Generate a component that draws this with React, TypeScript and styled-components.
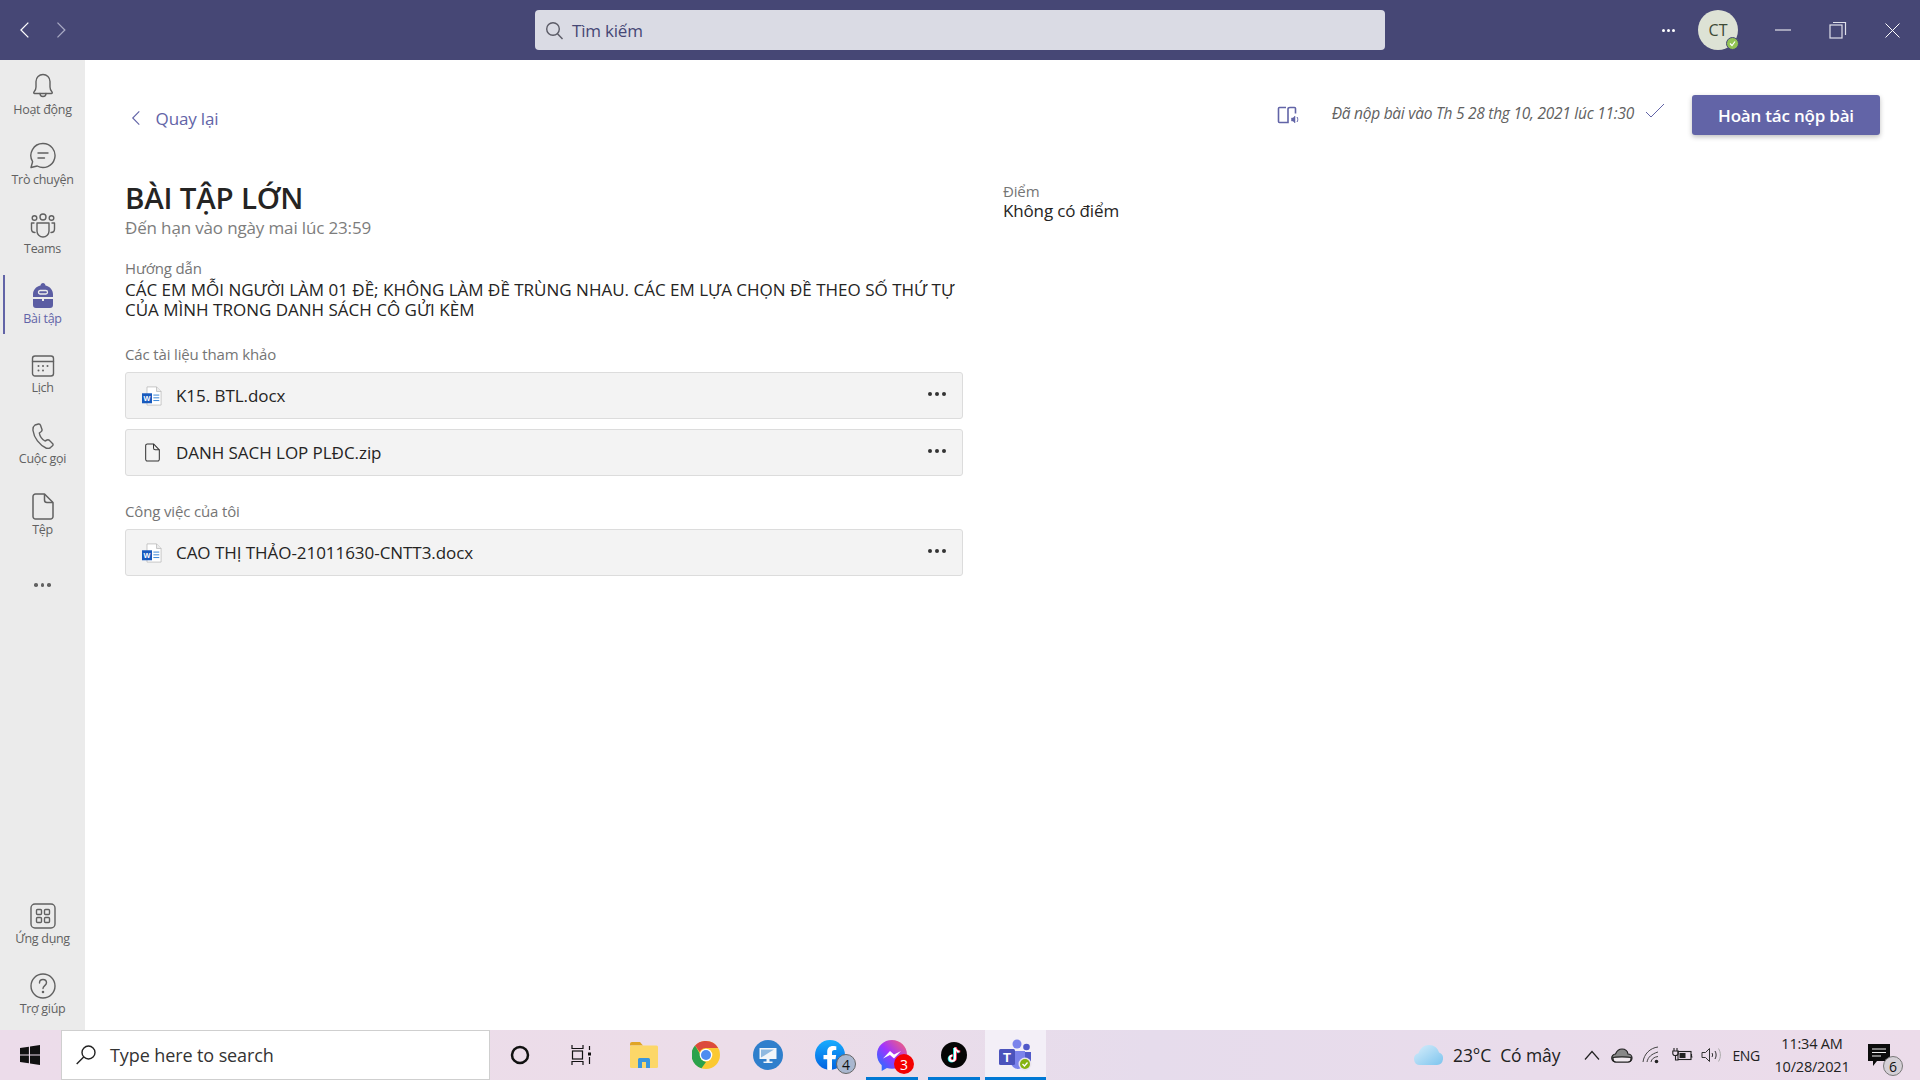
import React from "react";
import styled, { createGlobalStyle } from "styled-components";

const Global = createGlobalStyle`
  html, body { margin: 0; padding: 0; height: 100%; overflow: hidden; }
  body { font-family: "Open Sans", "Noto Sans", "Liberation Sans", sans-serif; background: #fff; color: #252423; }
  #root { height: 100%; }
  * { box-sizing: border-box; }
`;

const Page = styled.div`
  width: 1920px; height: 1080px; display: flex; flex-direction: column;
`;
const TitleBar = styled.header`
  height: 60px; flex: none; background: #464775; display: flex; align-items: center; position: relative; z-index: 2;
`;
const NavArrows = styled.div`
  width: 535px; flex: none; display: flex; gap: 26px; padding: 0 0 0 19px; align-items: center;
`;
const SearchBox = styled.div`
  width: 850px; height: 40px; flex: none; background: #dadbe4; border-radius: 4px; display: flex; align-items: center;
  padding-left: 10px; gap: 8px; font-size: 17px; color: #464775; letter-spacing: -0.2px;
`;
const TitleRight = styled.div`
  flex: 1; display: flex; align-items: center; position: relative;
`;
const Dots = styled.div`
  display: flex; gap: ${p => p.$gap ?? 3}px;
  i { display: block; width: ${p => p.$size ?? 3}px; height: ${p => p.$size ?? 3}px; border-radius: 50%; background: ${p => p.$color ?? "#fff"}; }
`;
const MoreHolder = styled.div`
  margin-left: 275px; width: 16px; display: flex; justify-content: center;
`;
const Avatar = styled.div`
  margin-left: 22px; width: 40px; height: 40px; border-radius: 50%; background: #dde2d5; color: #3d4a35;
  display: flex; align-items: center; justify-content: center; font-size: 16px; position: relative; flex: none;
`;
const Presence = styled.span`
  position: absolute; right: -1px; bottom: 0; width: 13px; height: 13px; border-radius: 50%; background: #92c353;
  border: 1px solid #464775; display: flex; align-items: center; justify-content: center;
`;
const WinButtons = styled.div`
  margin-left: 37px; display: flex; gap: 38px; align-items: center;
`;

const Middle = styled.div`
  flex: 1; min-height: 0; display: flex;
`;
const Rail = styled.nav`
  width: 85px; flex: none; background: #ebebeb; box-shadow: 1px 0 3px rgba(0,0,0,.06); display: flex; flex-direction: column;
  justify-content: space-between;
`;
const RailGroup = styled.div`
  display: flex; flex-direction: column;
`;
const RailItem = styled.div`
  height: 70px; display: flex; flex-direction: column; align-items: center; justify-content: center; gap: 2px;
  font-size: 12.5px; letter-spacing: -0.3px; color: ${p => (p.$active ? "#6264a7" : "#616161")}; position: relative; line-height: 16px;
  svg { display: block; }
`;
const ActiveBar = styled.span`
  position: absolute; left: 3px; top: 5px; bottom: 6px; width: 2px; background: #6264a7;
`;
const MoreItem = styled.div`
  height: 40px; margin-top: 15px; display: flex; align-items: center; justify-content: center;
`;

const Main = styled.main`
  flex: 1; min-width: 0; padding: 35px 40px 0 40px; background: #fff;
`;
const HeaderRow = styled.div`
  height: 40px; display: flex; align-items: center; justify-content: space-between;
`;
const BackLink = styled.div`
  display: flex; align-items: center; gap: 15px; color: #6264a7; font-size: 17px; padding: 6px 0 0 6px; letter-spacing: -0.15px;
`;
const Submit = styled.div`
  display: flex; align-items: center;
`;
const SubmittedText = styled.span`
  font-style: italic; font-size: 15.5px; color: #616161; margin: -5px 11px 0 33px; letter-spacing: -0.25px;
`;
const PrimaryButton = styled.button`
  width: 188px; height: 40px; margin-left: 27px; border: 0; border-radius: 3px; background: #6264a7; color: #fff;
  font: 600 17px "Open Sans", sans-serif; letter-spacing: -0.2px; box-shadow: 0 2px 5px rgba(0,0,0,.25);
`;
const Body = styled.div`
  display: grid; grid-template-columns: 838px 1fr; column-gap: 40px; margin-top: 44px;
`;
const Title = styled.h1`
  margin: 0; font-size: 29.5px; font-weight: 600; line-height: 38px; color: #252423; letter-spacing: -0.2px;
`;
const Due = styled.div`
  font-size: 17px; line-height: 20px; color: #7d7d7d; letter-spacing: -0.15px; margin-top: 1px;
`;
const SmallLabel = styled.div`
  font-size: 15px; line-height: 20px; color: #757575; letter-spacing: -0.15px; margin-top: ${p => p.$top ?? 0}px;
`;
const Instructions = styled.div`
  font-size: 17px; line-height: 20px; color: #252423; letter-spacing: 0; margin-top: 2px;
`;
const FileList = styled.div`
  display: flex; flex-direction: column; gap: 10px; margin-top: 8px;
`;
const FileRow = styled.div`
  height: 47px; background: #f3f3f3; border: 1px solid #dcdcdc; border-radius: 3px; display: flex; align-items: center;
  padding: 0 16px 0 16px;
`;
const FileIcon = styled.div`
  width: 20px; display: flex; justify-content: center; flex: none; margin-right: 14px;
`;
const FileName = styled.span`
  flex: 1; font-size: 17px; color: #252423; letter-spacing: -0.05px;
`;
const RowMenu = styled.div`
  margin-top: -3px;
`;
const RightCol = styled.aside`
  padding-top: 2px;
`;
const ScoreValue = styled.div`
  font-size: 17px; line-height: 19px; color: #252423; letter-spacing: -0.15px;
`;

const Taskbar = styled.footer`
  height: 50px; flex: none; display: flex; align-items: stretch; background: linear-gradient(90deg, #ecdcea 0%, #ecdde9 40%, #e6dcec 60%, #ecdcea 100%);
  position: relative; z-index: 2;
`;
const StartButton = styled.div`
  width: 61px; flex: none; display: flex; align-items: center; justify-content: center; padding-right: 2px;
`;
const TaskSearch = styled.div`
  width: 429px; flex: none; background: #fff; border: 1px solid #cfcfcf; display: flex; align-items: center; padding-left: 13px; gap: 13px;
  font: 18px "Open Sans", sans-serif; color: #333; letter-spacing: -0.1px;
`;
const TaskIcons = styled.div`
  display: flex; flex: none; padding-left: 0;
`;
const TaskCell = styled.div`
  width: ${p => p.$w ?? 62}px; display: flex; align-items: center; justify-content: center; position: relative;
  background: ${p => (p.$focused ? "#f3eff7" : "transparent")};
`;
const RunningLine = styled.span`
  position: absolute; left: ${p => p.$inset ?? 5}px; right: ${p => p.$inset ?? 5}px; bottom: 0; height: 3px; background: #0078d4;
`;
const Badge = styled.span`
  position: absolute; width: 20px; height: 20px; border-radius: 50%; font: 14px "Open Sans", sans-serif;
  display: flex; align-items: center; justify-content: center;
  left: ${p => p.$left}px; top: ${p => p.$top}px;
  background: ${p => p.$bg}; color: ${p => p.$fg}; border: ${p => p.$border ?? "none"};
`;
const Tray = styled.div`
  margin-left: auto; display: flex; align-items: center; color: #222; position: relative; height: 100%;
`;
const WeatherText = styled.span`
  font: 17.5px "Open Sans", sans-serif; letter-spacing: -0.1px; margin-left: ${p => p.$gap ?? 9}px;
`;
const TrayIcon = styled.div`
  width: 30px; display: flex; justify-content: center; align-items: center;
`;
const TrayChevron = styled(TrayIcon)`
  margin-left: 17px;
`;
const Eng = styled.span`
  font: 14px "Open Sans", sans-serif; margin-left: 5px; letter-spacing: -0.3px;
`;
const Clock = styled.div`
  margin-left: 12px; width: 80px; text-align: center; font: 14.5px/23px "Open Sans", sans-serif; letter-spacing: -0.2px;
`;
const Notify = styled.div`
  width: 68px; padding-left: 16px; position: relative; display: flex; align-items: center; height: 100%;
`;

const Chevron = ({ dir, color, size = 18 }: { dir: "l" | "r"; color: string; size?: number }) => (
  <svg width={size * 0.6} height={size} viewBox="0 0 11 18" fill="none" stroke={color} strokeWidth="1.3">
    <path d={dir === "l" ? "M9.5 1.5 2 9l7.5 7.5" : "M1.5 1.5 9 9l-7.5 7.5"} />
  </svg>
);

const stroke = { fill: "none", stroke: "#616161", strokeWidth: 1.4, strokeLinecap: "round" as const, strokeLinejoin: "round" as const };

const Bell = () => (
  <svg width="24" height="28" viewBox="0 0 24 28" {...stroke}>
    <path d="M3 20c1.500-1.500 2-3 2-5V9.500a7 7 0 0 1 14 0V15c0 2 .5 3.500 2 5 .6.7.2 1.500-.6 1.500H3.600C2.800 21.500 2.400 20.700 3 20z" />
    <path d="M9 21.500a3 3 0 0 0 6 0" />
  </svg>
);
const Chat = () => (
  <svg width="28" height="28" viewBox="0 0 28 28" {...stroke}>
    <path d="M14 1.500a12 12 0 1 1-5.800 22.500L2 25.500l1.600-5.800A12 12 0 0 1 14 1.500z" />
    <path d="M9 11h10M9 16h6.500" />
  </svg>
);
const TeamsIcon = () => (
  <svg width="28" height="26" viewBox="0 0 28 26" {...stroke}>
    <circle cx="14" cy="4" r="3" /><circle cx="5.500" cy="5" r="2.300" /><circle cx="22.500" cy="5" r="2.300" />
    <path d="M8 10h12v8a6 6 0 0 1-12 0z" />
    <path d="M5 10H2.500v6c0 2 1.500 3.500 3.500 3.500M23 10h2.500v6c0 2-1.500 3.500-3.500 3.500" />
  </svg>
);
const Backpack = () => (
  <svg width="22" height="26" viewBox="0 0 22 26">
    <path d="M11 0c1.500 0 2.200 1.200 2.500 2.500C18 3.500 21 7 21 11.500V14H1v-2.500C1 7 4 3.500 8.500 2.500 8.800 1.200 9.500 0 11 0z" fill="#5b5da3" />
    <path d="M1 16h9v2h2v-2h9v6a3 3 0 0 1-3 3H4a3 3 0 0 1-3-3z" fill="#5b5da3" />
    <rect x="6.500" y="7.500" width="9" height="3.500" rx="1.700" fill="none" stroke="#ebebeb" strokeWidth="1.300" />
  </svg>
);
const Calendar = () => (
  <svg width="24" height="24" viewBox="0 0 24 24" {...stroke}>
    <rect x="1.500" y="2" width="21" height="20" rx="2.500" /><path d="M1.500 7.500h21" />
    <g fill="#616161" stroke="none">
      <circle cx="7.500" cy="12" r="1" /><circle cx="12" cy="12" r="1" /><circle cx="16.500" cy="12" r="1" />
      <circle cx="7.500" cy="16.500" r="1" /><circle cx="12" cy="16.500" r="1" />
    </g>
  </svg>
);
const Phone = () => (
  <svg width="24" height="26" viewBox="0 0 24 26" {...stroke}>
    <path d="M4 2 7.500 1c1-.2 1.700.3 2 1.200L11 6.500c.3 1-.2 1.700-1 2.300L8.300 10c.5 3 2.700 6.300 5.700 8l2-1c1-.5 1.700-.3 2.500.4l3 3c.7.8.7 1.700 0 2.400l-2 1.800c-1.300 1-3 1-4.500.4C8.500 22 3 15 2 7.500 1.800 5 2.500 3 4 2z" />
  </svg>
);
const DocOutline = ({ w = 22, h = 27, color = "#616161" }: { w?: number; h?: number; color?: string }) => (
  <svg width={w} height={h} viewBox="0 0 22 27" fill="none" stroke={color} strokeWidth="1.500" strokeLinejoin="round">
    <path d="M3.500 1h9L21 9.500V23.500a2.500 2.500 0 0 1-2.500 2.500h-15A2.500 2.500 0 0 1 1 23.500v-20A2.500 2.500 0 0 1 3.500 1z" />
    <path d="M12.500 1v6a2.500 2.500 0 0 0 2.500 2.500h6" />
  </svg>
);
const Apps = () => (
  <svg width="26" height="26" viewBox="0 0 26 26" {...stroke}>
    <rect x="1" y="1" width="24" height="24" rx="4" />
    <rect x="6.500" y="6.500" width="5" height="5" rx="1" /><rect x="14.500" y="6.500" width="5" height="5" rx="1" />
    <rect x="6.500" y="14.500" width="5" height="5" rx="1" /><rect x="14.500" y="14.500" width="5" height="5" rx="1" />
  </svg>
);
const Help = () => (
  <svg width="26" height="26" viewBox="0 0 26 26" {...stroke}>
    <circle cx="13" cy="13" r="12" />
    <path d="M9.500 10c0-2 1.500-3.500 3.500-3.500s3.500 1.500 3.500 3.300c0 2.700-3.500 3-3.500 5.700" />
    <circle cx="13" cy="19" r=".6" />
  </svg>
);
const SearchGlass = ({ color = "#5b5b66", size = 19 }: { color?: string; size?: number }) => (
  <svg width={size} height={size} viewBox="0 0 19 19" fill="none" stroke={color} strokeWidth="1.400">
    <circle cx="8" cy="8" r="6.300" /><path d="m12.500 12.700 5 5.300" />
  </svg>
);
const TaskSearchGlass = () => (
  <svg width="22" height="22" viewBox="0 0 22 22" fill="none" stroke="#222" strokeWidth="1.400">
    <circle cx="13.500" cy="8.500" r="6.500" /><path d="m8.700 13-7 7" />
  </svg>
);
const WordIcon = () => (
  <svg width="22" height="22" viewBox="0 0 22 22">
    <path d="M5.500 1h10.500l5 5v15H5.500z" fill="#fff" stroke="#b5b5b5" strokeWidth=".8" />
    <path d="M16 1v5h5" fill="#ececec" stroke="#b5b5b5" strokeWidth=".8" />
    <path d="M12.500 10H19M12.500 13H19M12.500 16H19" stroke="#2b7cd3" strokeWidth="1" />
    <rect x="0" y="8" width="11" height="11" fill="#185abd" />
    <text x="5.500" y="16.500" textAnchor="middle" fontSize="8" fontWeight="700" fill="#fff" fontFamily="Liberation Sans">W</text>
  </svg>
);
const ImmersiveReader = () => (
  <svg width="22" height="20" viewBox="0 0 22 20" fill="none" stroke="#6264a7" strokeWidth="1.600">
    <path d="M9 2.500H2.500a1 1 0 0 0-1 1V16.500a1 1 0 0 0 1 1H11V4c0-1 1-1.500 2-1.500h4.500a1 1 0 0 1 1 1v5" />
    <path d="M14.500 13h1.500l2-2v7l-2-2h-1.500z" fill="#6264a7" strokeWidth=".5" />
    <path d="M20 12c1 1.300 1 3.700 0 5" strokeWidth="1" />
  </svg>
);
const WinLogo = () => (
  <svg width="20" height="20" viewBox="0 0 20 20" fill="#111">
    <path d="M0 3 8.900 1.700v7.800H0zM10 1.500 20 0v9.500H10zM0 10.500h8.900v7.800L0 17zM10 10.500h10V20l-10-1.500z" />
  </svg>
);
const TaskView = () => (
  <svg width="20" height="20" viewBox="0 0 20 20" fill="none" stroke="#111" strokeWidth="1.200">
    <path d="M1 0v3.500h11V0M1 20v-3.500h11V20" />
    <rect x="1.500" y="6" width="10" height="8" />
    <path d="M18.500 1v4M18.500 12v7" />
    <rect x="17" y="7.500" width="3" height="3" fill="#111" stroke="none" />
  </svg>
);
const Folder = () => (
  <svg width="28" height="26" viewBox="0 0 28 26">
    <path d="M0 2a2 2 0 0 1 2-2h8l3 3.500H0z" fill="#e0a526" />
    <rect x="0" y="3.500" width="28" height="22.500" rx="1.500" fill="#fcd768" />
    <path d="M8 26v-8.500a1.500 1.500 0 0 1 1.500-1.500h9a1.500 1.500 0 0 1 1.500 1.500V26h-4v-6h-4v6z" fill="#3a96dd" />
  </svg>
);
const Chrome = () => (
  <svg width="28" height="28" viewBox="0 0 28 28">
    <circle cx="14" cy="14" r="14" fill="#fbc932" />
    <path d="M14 0a14 14 0 0 1 12.100 7H14a7 7 0 0 0-6.300 4L3 4.500A14 14 0 0 1 14 0z" fill="#dc4a3d" />
    <path d="M3 4.500 8 13a7 7 0 0 0 6 8l-4.500 6.300A14 14 0 0 1 3 4.500z" fill="#2ba24c" />
    <circle cx="14" cy="14" r="6.300" fill="#fff" /><circle cx="14" cy="14" r="5" fill="#4f8df0" />
  </svg>
);
const MonitorApp = () => (
  <svg width="30" height="30" viewBox="0 0 30 30">
    <circle cx="15" cy="15" r="15" fill="#2f7fcc" />
    <rect x="6.500" y="8" width="17" height="11" fill="#f2f6fa" />
    <path d="M8 17.500 21 9.500H8z" fill="#8fb9e0" />
    <path d="M13.500 19h3v2.500h3V23h-9v-1.500h3z" fill="#f2f6fa" />
  </svg>
);
const Facebook = () => (
  <svg width="30" height="30" viewBox="0 0 30 30">
    <defs><linearGradient id="fbg" x1="0" y1="0" x2="0" y2="1"><stop offset="0" stopColor="#18acfe" /><stop offset="1" stopColor="#0163e0" /></linearGradient></defs>
    <circle cx="15" cy="15" r="15" fill="url(#fbg)" />
    <path d="M20.500 19.300 21.200 15H17v-2.800c0-1.200.6-2.300 2.400-2.300h1.900V6.200s-1.700-.3-3.400-.3c-3.400 0-5.700 2.100-5.700 5.800V15H8.500v4.300h3.700v10.500a15 15 0 0 0 4.800 0V19.300z" fill="#fff" />
  </svg>
);
const Messenger = () => (
  <svg width="30" height="31" viewBox="0 0 30 31">
    <defs><linearGradient id="msg" x1="0" y1="1" x2="1" y2="0"><stop offset="0" stopColor="#0a7cff" /><stop offset=".5" stopColor="#a033ff" /><stop offset="1" stopColor="#ff6968" /></linearGradient></defs>
    <path d="M15 0C6.600 0 0 6.200 0 14.500c0 4.300 1.800 8.100 4.700 10.700V31l5.200-3c1.600.4 3.300.7 5.100.7 8.400 0 15-6.200 15-14.200S23.400 0 15 0z" fill="url(#msg)" />
    <path d="m6 18.500 7-7.500 4 3.500 7-3.500-7 7.500-4-3.500z" fill="#fff" />
  </svg>
);
const TikTok = () => (
  <svg width="26" height="26" viewBox="0 0 26 26">
    <circle cx="13" cy="13" r="13" fill="#050505" />
    <path d="M14 5.500v10.700a2.700 2.700 0 1 1-2.700-2.700" fill="none" stroke="#25f4ee" strokeWidth="2.200" transform="translate(-.8 .5)" />
    <path d="M14 5.500c.3 2.500 2 4 4.500 4.200" fill="none" stroke="#25f4ee" strokeWidth="2.200" transform="translate(-.8 .5)" />
    <path d="M14 5.500v10.700a2.700 2.700 0 1 1-2.700-2.700" fill="none" stroke="#fe2c55" strokeWidth="2.200" transform="translate(.8 -.2)" />
    <path d="M14 5.500c.3 2.500 2 4 4.500 4.200" fill="none" stroke="#fe2c55" strokeWidth="2.200" transform="translate(.8 -.2)" />
    <path d="M14 5.500v10.700a2.700 2.700 0 1 1-2.700-2.700M14 5.500c.3 2.500 2 4 4.500 4.200" fill="none" stroke="#fff" strokeWidth="2" />
  </svg>
);
const TeamsLogo = () => (
  <svg width="34" height="32" viewBox="0 0 34 32">
    <circle cx="18" cy="5" r="4.500" fill="#7b83eb" />
    <circle cx="27.500" cy="8" r="3.300" fill="#5059c9" />
    <path d="M21 13h11v8.500a5 5 0 0 1-5 5h-1z" fill="#5059c9" />
    <path d="M11 12h15v11a7 7 0 0 1-14 0z" fill="#7b83eb" />
    <rect x="0" y="10" width="16" height="16" rx="1.500" fill="#4b53bc" />
    <text x="8" y="22.500" textAnchor="middle" fontSize="13" fontWeight="700" fill="#fff" fontFamily="Liberation Sans">T</text>
    <circle cx="26" cy="25" r="6.500" fill="#e9e4ee" />
    <circle cx="26" cy="25" r="5" fill="#85b30f" />
    <path d="m23.500 25 2 2 3-3.500" fill="none" stroke="#fff" strokeWidth="1.300" />
  </svg>
);
const Cloud = () => (
  <svg width="30" height="22" viewBox="0 0 30 22">
    <defs><linearGradient id="clo" x1="0" y1="0" x2="1" y2="1"><stop offset="0" stopColor="#d8eefb" /><stop offset="1" stopColor="#7cc4ee" /></linearGradient></defs>
    <path d="M7 21a6 6 0 0 1-1.500-11.800C7 4.500 11 1 16 1c5 0 9 3 10 7.500A6.500 6.500 0 0 1 24 21z" fill="url(#clo)" />
  </svg>
);
const Onedrive = () => (
  <svg width="22" height="15" viewBox="0 0 22 15" fill="none" stroke="#222" strokeWidth="1.200">
    <path d="M5 14a4 4 0 0 1-.5-8C6 2.500 8.500 1 11 1c3 0 5.500 2 6 5a4 4 0 0 1 0 8z" fill="#888" />
    <path d="M2 9.500c2-.8 16-.8 18 0V11c0 2-1.500 3-3 3H5c-1.500 0-3-1-3-3z" fill="#f1eaf0" />
  </svg>
);
const Wifi = () => (
  <svg width="20" height="18" viewBox="0 0 20 18" fill="none" stroke="#444" strokeWidth="1">
    <path d="M1 16C2 8 8 2 16 1M5 16c1-5 4.500-8 11-10M9 16c.5-3 3-5 7-5.500" />
    <circle cx="14.500" cy="15.500" r="1.800" fill="#222" stroke="none" />
  </svg>
);
const Battery = () => (
  <svg width="22" height="16" viewBox="0 0 22 16" fill="none" stroke="#222" strokeWidth="1.100">
    <rect x="7" y="4.500" width="13" height="8" /><rect x="8.500" y="6" width="6" height="5" fill="#222" stroke="none" />
    <path d="M20.500 7v3h1" />
    <path d="M3 1v3M6 1v3M1.800 4h5.400v2.500c0 1-1 2-2.700 2s-2.700-1-2.700-2zM4.500 8.500V13h3" />
  </svg>
);
const Speaker = () => (
  <svg width="22" height="16" viewBox="0 0 22 16" fill="none" stroke="#333" strokeWidth="1">
    <path d="M1 5.500h3.500L8.500 1.500v13l-4-4H1z" />
    <path d="M11 6c.8 1.200.8 2.800 0 4M14 4c1.500 2.300 1.500 5.700 0 8" />
    <path d="M17.500 1.500c2.500 4 2.500 9 0 13" stroke="#aaa" />
  </svg>
);
const NotifIcon = () => (
  <svg width="22" height="22" viewBox="0 0 22 22">
    <path d="M0 0h22v17H9l-4 5v-5H0z" fill="#0c0c0c" />
    <path d="M4 5h14M4 8.500h14M4 12h9" stroke="#eee" strokeWidth="1.100" />
  </svg>
);
const SubmittedCheck = styled.svg`
  margin-top: -8px;
`;

const DotsGroup = ({ gap, size, color }: { gap?: number; size?: number; color?: string }) => (
  <Dots $gap={gap} $size={size} $color={color}><i /><i /><i /></Dots>
);

const railTop = [
  { label: "Hoạt động", icon: <Bell /> },
  { label: "Trò chuyện", icon: <Chat /> },
  { label: "Teams", icon: <TeamsIcon /> },
  { label: "Bài tập", icon: <Backpack />, active: true },
  { label: "Lịch", icon: <Calendar /> },
  { label: "Cuộc gọi", icon: <Phone /> },
  { label: "Tệp", icon: <DocOutline /> },
];

const FileItem = ({ icon, name }: { icon: React.ReactNode; name: string }) => (
  <FileRow>
    <FileIcon>{icon}</FileIcon>
    <FileName>{name}</FileName>
    <RowMenu><DotsGroup gap={3} size={4} color="#333" /></RowMenu>
  </FileRow>
);

export default function App() {
  return (
    <Page>
      <Global />
      <TitleBar>
        <NavArrows>
          <Chevron dir="l" color="#fff" />
          <Chevron dir="r" color="#a9aac4" />
        </NavArrows>
        <SearchBox><SearchGlass />Tìm kiếm</SearchBox>
        <TitleRight>
          <MoreHolder><DotsGroup gap={2} size={3} /></MoreHolder>
          <Avatar>CT<Presence><svg width="7" height="7" viewBox="0 0 7 7" fill="none" stroke="#fff" strokeWidth="1.200"><path d="m1 3.500 2 2 3-4" /></svg></Presence></Avatar>
          <WinButtons>
            <svg width="16" height="16" viewBox="0 0 16 16" stroke="#fff" strokeWidth="1"><path d="M0 8h16" /></svg>
            <svg width="18" height="18" viewBox="0 0 18 18" fill="none" stroke="#dfe0ea" strokeWidth="1.200"><rect x="1" y="4" width="12" height="13" /><path d="M4 1.500h12.500V14" /></svg>
            <svg width="15" height="15" viewBox="0 0 15 15" stroke="#fff" strokeWidth="1"><path d="m.5.500 14 14M14.500.500l-14 14" /></svg>
          </WinButtons>
        </TitleRight>
      </TitleBar>
      <Middle>
        <Rail>
          <RailGroup>
            {railTop.map(it => (
              <RailItem key={it.label} $active={it.active}>
                {it.active && <ActiveBar />}
                {it.icon}
                <span>{it.label}</span>
              </RailItem>
            ))}
            <MoreItem><DotsGroup gap={3} size={3.5} color="#616161" /></MoreItem>
          </RailGroup>
          <RailGroup>
            <RailItem><Apps /><span>Ứng dụng</span></RailItem>
            <RailItem><Help /><span>Trợ giúp</span></RailItem>
          </RailGroup>
        </Rail>
        <Main>
          <HeaderRow>
            <BackLink><Chevron dir="l" color="#6264a7" size={16} />Quay lại</BackLink>
            <Submit>
              <ImmersiveReader />
              <SubmittedText>Đã nộp bài vào Th 5 28 thg 10, 2021 lúc 11:30</SubmittedText>
              <SubmittedCheck width="20" height="16" viewBox="0 0 20 16" fill="none" stroke="#6264a7" strokeWidth="1"><path d="m1 9 5 5L19 1" /></SubmittedCheck>
              <PrimaryButton>Hoàn tác nộp bài</PrimaryButton>
            </Submit>
          </HeaderRow>
          <Body>
            <section>
              <Title>BÀI TẬP LỚN</Title>
              <Due>Đến hạn vào ngày mai lúc 23:59</Due>
              <SmallLabel $top={20}>Hướng dẫn</SmallLabel>
              <Instructions>CÁC EM MỖI NGƯỜI LÀM 01 ĐỀ; KHÔNG LÀM ĐỀ TRÙNG NHAU. CÁC EM LỰA CHỌN ĐỀ THEO SỐ THỨ TỰ CỦA MÌNH TRONG DANH SÁCH CÔ GỬI KÈM</Instructions>
              <SmallLabel $top={24}>Các tài liệu tham khảo</SmallLabel>
              <FileList>
                <FileItem icon={<WordIcon />} name="K15. BTL.docx" />
                <FileItem icon={<DocOutline w={15} h={19} color="#333" />} name="DANH SACH LOP PLĐC.zip" />
              </FileList>
              <SmallLabel $top={25}>Công việc của tôi</SmallLabel>
              <FileList>
                <FileItem icon={<WordIcon />} name="CAO THỊ THẢO-21011630-CNTT3.docx" />
              </FileList>
            </section>
            <RightCol>
              <SmallLabel>Điểm</SmallLabel>
              <ScoreValue>Không có điểm</ScoreValue>
            </RightCol>
          </Body>
        </Main>
      </Middle>
      <Taskbar>
        <StartButton><WinLogo /></StartButton>
        <TaskSearch><TaskSearchGlass />Type here to search</TaskSearch>
        <TaskIcons>
          <TaskCell $w={60}><svg width="20" height="20" viewBox="0 0 20 20" fill="none" stroke="#111" strokeWidth="2.500"><circle cx="10" cy="10" r="8" /></svg></TaskCell>
          <TaskCell><TaskView /></TaskCell>
          <TaskCell $w={63}><Folder /></TaskCell>
          <TaskCell><Chrome /></TaskCell>
          <TaskCell><MonitorApp /></TaskCell>
          <TaskCell><Facebook /><Badge $left={37} $top={24} $bg="#a9b7cf" $fg="#111" $border="1px solid #666">4</Badge></TaskCell>
          <TaskCell><Messenger /><Badge $left={33} $top={24} $bg="#f40000" $fg="#fff">3</Badge><RunningLine /></TaskCell>
          <TaskCell><TikTok /><RunningLine /></TaskCell>
          <TaskCell $focused $w={61}><TeamsLogo /><RunningLine $inset={0} /></TaskCell>
        </TaskIcons>
        <Tray>
          <Cloud />
          <WeatherText $gap={10}>23°C</WeatherText>
          <WeatherText>Có mây</WeatherText>
          <TrayChevron><svg width="16" height="10" viewBox="0 0 16 10" fill="none" stroke="#222" strokeWidth="1.200"><path d="M1 9.500 8 1.500l7 8" /></svg></TrayChevron>
          <TrayIcon><Onedrive /></TrayIcon>
          <TrayIcon><Wifi /></TrayIcon>
          <TrayIcon><Battery /></TrayIcon>
          <TrayIcon><Speaker /></TrayIcon>
          <Eng>ENG</Eng>
          <Clock>11:34 AM<br />10/28/2021</Clock>
          <Notify><NotifIcon /><Badge $left={31} $top={26} $bg="#d5d0d6" $fg="#111" $border="1px solid #777">6</Badge></Notify>
        </Tray>
      </Taskbar>
    </Page>
  );
}
